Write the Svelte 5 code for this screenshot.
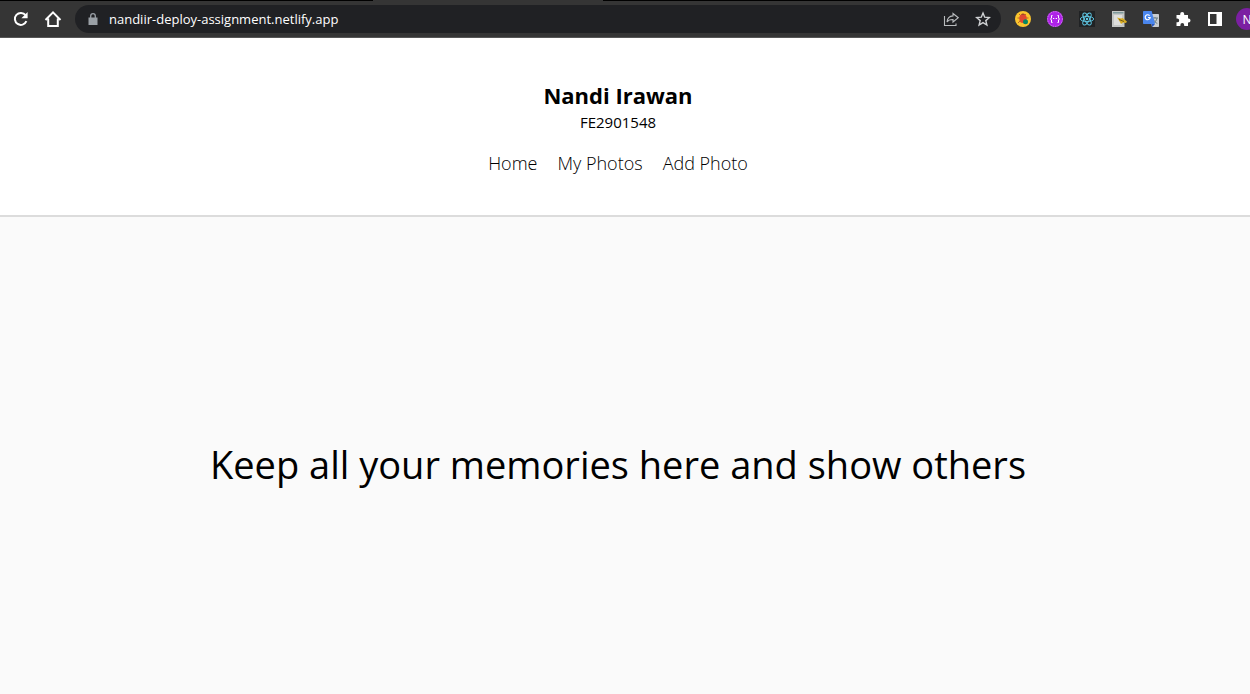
<script>
  const links = ['Home', 'My Photos', 'Add Photo'];
</script>

<div class="window">
  <div class="tabs"></div>
  <div class="toolbar">
    <button class="tool" aria-label="Reload">
      <svg width="16" height="16" viewBox="0 0 16 16" fill="none" stroke="#fff" stroke-width="2">
        <path d="M13.4 10.2A6 6 0 1 1 12.6 4.2" /><path d="M14.6 1v6.2H8.4z" fill="#fff" stroke="none" />
      </svg>
    </button>
    <button class="tool" aria-label="Home page">
      <svg width="18" height="18" viewBox="0 0 18 18" fill="none" stroke="#fff" stroke-width="2">
        <path d="M1.5 10 9 2.4 16.5 10M4.2 8.5V16h9.6V8.5" />
      </svg>
    </button>
    <div class="address">
      <svg width="10" height="12" viewBox="0 0 10 12" aria-hidden="true">
        <path d="M0.5 4.5h9V12h-9z" fill="#9aa0a6" /><path d="M2.7 5V3a2.3 2.3 0 0 1 4.6 0v2" fill="none" stroke="#9aa0a6" stroke-width="1.3" />
      </svg>
      <input aria-label="Address" value="nandiir-deploy-assignment.netlify.app" spellcheck="false" />
      <button class="tool" aria-label="Share">
        <svg width="16" height="16" viewBox="0 0 16 16" fill="none" stroke="#b9bcbe" stroke-width="1.1">
          <path d="M1.500 5v9.500h11.500V12.500" /><path d="M10 2.500 15.300 6.700 10 11V8.500C7 8.400 5.200 9.200 4 11 4.300 7.600 6.500 5.200 10 4.900z" />
        </svg>
      </button>
      <button class="tool" aria-label="Bookmark">
        <svg width="16" height="16" viewBox="0 0 16 16" fill="none" stroke="#d0d2d4" stroke-width="1.4">
          <path d="m8 2 1.700 4.200 4.600.4-3.500 3 1.100 4.400L8 11.600 4.100 14l1.100-4.400-3.500-3 4.600-.4z" />
        </svg>
      </button>
    </div>
    <div class="extensions">
      <button class="tool" aria-label="Bug extension">
        <svg width="16" height="16" viewBox="0 0 16 16">
          <circle cx="8" cy="8" r="8" fill="#fbc52d" />
          <path d="m4 3 2 2m5-2-2 2M2.500 7H5m6 0h2.500M3 12l2-2" stroke="#b96b28" />
          <ellipse cx="8" cy="7.500" rx="3.700" ry="4.500" fill="#df4930" /><path d="M6 3.700a2.200 2.200 0 0 1 4 0z" fill="#8d4226" />
          <circle cx="10.500" cy="10.700" r="2.500" fill="#078764" />
        </svg>
      </button>
      <button class="tool" aria-label="Code extension">
        <svg width="16" height="16" viewBox="0 0 16 16" fill="none">
          <circle cx="8" cy="8" r="8" fill="#af22e8" /><circle cx="8" cy="8" r="7.400" stroke="#dc91f5" stroke-width=".8" stroke-dasharray="1.5 1" />
          <path d="M5.500 4.500H4.500v2.500l-1 1 1 1v2.500h1m5-7h1v2.500l1 1-1 1v2.500h-1M6 7.500h1.300m1.400 0H10" stroke="#fff" />
        </svg>
      </button>
      <button class="tool" aria-label="React extension">
        <svg width="16" height="16" viewBox="0 0 16 16" fill="none" stroke="#61cdea" stroke-width=".9">
          <path d="M0 0h16v16H0z" fill="#202224" stroke="none" />
          <ellipse cx="8" cy="8" rx="6.700" ry="2.600" /><ellipse cx="8" cy="8" rx="6.700" ry="2.600" transform="rotate(60 8 8)" /><ellipse cx="8" cy="8" rx="6.700" ry="2.600" transform="rotate(120 8 8)" />
          <circle cx="8" cy="8" r="1.200" fill="#61cdea" stroke="none" />
        </svg>
      </button>
      <button class="tool" aria-label="Notes extension">
        <svg width="16" height="16" viewBox="0 0 16 16">
          <path d="M1 0h12.500v16H1z" fill="#c4c6c5" /><path d="M2 1h10.500v1.500H2z" fill="#7e999b" /><path d="M3 4h8v10H3z" fill="#dededc" />
          <path d="m6 6.500 4 1 1.500-.5L16 10.500 15 12l-3-.5-2 1.500-1-2z" fill="#d8ac22" /><path d="m8 8.500 5 2" stroke="#735b16" />
        </svg>
      </button>
      <button class="tool" aria-label="Translate">
        <svg width="16" height="16" viewBox="0 0 16 16" fill="none">
          <path d="M6 3h9.300q.7 0 .7.7v11.600q0 .7-.7.7H9z" fill="#c8ccd0" /><path d="M9 7h6m-3-1v1m2 0c-.5 2.800-2 4.300-4 5m.3-4c1 2.300 2 3.500 4 4.500" stroke="#687d83" />
          <path d="M.7 0h8L12 13H.7Q0 13 0 12.300V.7Q0 0 .7 0z" fill="#4a86ee" /><path d="m8.500 13 .8 3L12 13z" fill="#2755b9" />
          <path d="M6.600 4.600A2.500 2.500 0 1 0 7.200 6.500H5" stroke="#fff" stroke-width="1.200" />
        </svg>
      </button>
      <button class="tool" aria-label="Extensions">
        <svg width="16" height="16" viewBox="0 0 16 16">
          <path d="M1.500 4h3.700V3a2 2 0 0 1 4 0v1H13v3.500h.5a2 2 0 0 1 0 4H13V15H9.200v-1a1.900 1.900 0 0 0-3.800 0v1H1.500v-3.700h.8a1.900 1.900 0 0 0 0-3.800h-.8z" fill="#fff" />
        </svg>
      </button>
      <button class="tool" aria-label="Side panel">
        <svg width="16" height="16" viewBox="0 0 16 16"><path d="M1 1h14v14H1zM3 3v10h6.500V3z" fill="#fff" fill-rule="evenodd" /></svg>
      </button>
      <button class="profile" aria-label="Profile N">N</button>
    </div>
  </div>

  <header>
    <h1>Nandi Irawan</h1>
    <p>FE2901548</p>
    <nav>
      {#each links as link}
        <a href="#{link}">{link}</a>
      {/each}
    </nav>
  </header>
  <main><h2>Keep all your memories here and show others</h2></main>
</div>

<style>
  :global(body) { margin: 0; }
  .window { min-height: 100vh; display: flex; flex-direction: column; overflow: hidden; background: #fafafa; color: #000; font-family: "Segoe UI", "Open Sans", "Noto Sans", sans-serif; }
  .tabs { height: 1px; background: linear-gradient(90deg, #000 373px, #353535 373px, #353535 603px, #000 603px); }
  .toolbar { box-sizing: border-box; height: 37px; display: flex; align-items: center; gap: 16px; padding-left: 13px; background: #353535; border-bottom: 1px solid #565656; }
  button { border: 0; padding: 0; background: none; }
  .tool { display: flex; align-items: center; justify-content: center; flex: none; width: 16px; height: 18px; }
  .tool svg { flex: none; }
  .address { flex: 1; min-width: 0; height: 28px; margin-left: -2px; box-sizing: border-box; display: flex; align-items: center; gap: 16px; padding: 0 10px 0 13px; border-radius: 14px; background: #202124; }
  .address input { flex: 1; min-width: 0; margin-left: -5px; padding: 0; border: 0; outline: 0; background: none; color: #fff; font: 13px "Segoe UI", "Open Sans", sans-serif; }
  .extensions { display: flex; align-items: center; gap: 16px; margin-left: -2px; }
  .profile { width: 22px; height: 22px; margin: 0 -8px 0 -3px; border-radius: 50%; background: #7b1fa2; color: #fff; font: 12px "Open Sans", sans-serif; }
  header { padding: 40px 14px 39px 0; display: flex; flex-direction: column; align-items: center; background: #fff; border-bottom: 2px solid #dcdcdc; }
  h1 { margin: 0; font-size: 22px; line-height: 34px; font-weight: 700; }
  p { margin: 0; font-size: 15px; line-height: 20px; }
  nav { display: flex; flex-wrap: wrap; gap: 20px; margin-top: 19px; }
  a { color: #000; text-decoration: none; font-size: 18px; line-height: 25px; font-weight: 300; }
  main { flex: 1; display: flex; align-items: center; justify-content: center; padding: 0 14px 0 0; }
  h2 { margin: 0 0 -16px; font-size: 38px; line-height: 56px; font-weight: 400; text-align: center; }
</style>
